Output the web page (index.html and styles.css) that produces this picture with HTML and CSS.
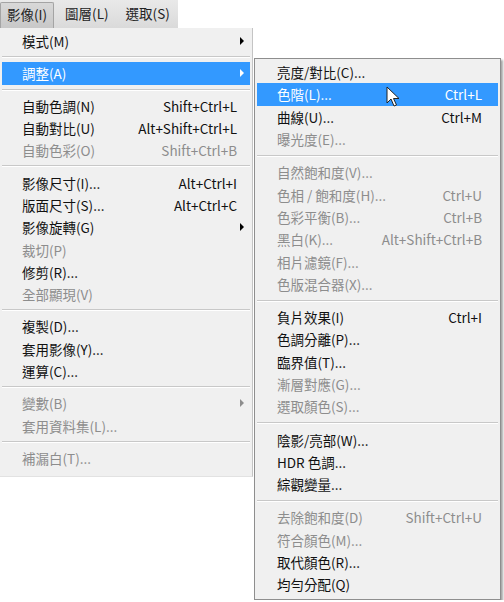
FILE: index.html
```html
<!DOCTYPE html>
<html>

<head>
    <title>影像選單</title>
    <link rel="stylesheet" href="styles.css">
</head>

<body>
    <div class="menubar">
        <span class="tab active">影像(I)</span>
        <span class="tab">圖層(L)</span>
        <span class="tab">選取(S)</span>
    </div>

    <div class="menus">
        <!-- main Image menu -->
        <div class="menu main-menu">
            <div class="item"><span class="label">模式(M)</span><span class="arrow"></span></div>
            <div class="sep"></div>
            <div class="item selected"><span class="label">調整(A)</span><span class="arrow"></span></div>
            <div class="sep"></div>
            <div class="item"><span class="label">自動色調(N)</span><span class="key">Shift+Ctrl+L</span></div>
            <div class="item"><span class="label">自動對比(U)</span><span class="key">Alt+Shift+Ctrl+L</span></div>
            <div class="item off"><span class="label">自動色彩(O)</span><span class="key">Shift+Ctrl+B</span></div>
            <div class="sep"></div>
            <div class="item"><span class="label">影像尺寸(I)...</span><span class="key">Alt+Ctrl+I</span></div>
            <div class="item"><span class="label">版面尺寸(S)...</span><span class="key">Alt+Ctrl+C</span></div>
            <div class="item"><span class="label">影像旋轉(G)</span><span class="arrow"></span></div>
            <div class="item off"><span class="label">裁切(P)</span></div>
            <div class="item"><span class="label">修剪(R)...</span></div>
            <div class="item off"><span class="label">全部顯現(V)</span></div>
            <div class="sep"></div>
            <div class="item"><span class="label">複製(D)...</span></div>
            <div class="item"><span class="label">套用影像(Y)...</span></div>
            <div class="item"><span class="label">運算(C)...</span></div>
            <div class="sep"></div>
            <div class="item off"><span class="label">變數(B)</span><span class="arrow"></span></div>
            <div class="item off"><span class="label">套用資料集(L)...</span></div>
            <div class="sep"></div>
            <div class="item off"><span class="label">補漏白(T)...</span></div>
        </div>

        <!-- Adjustments submenu -->
        <div class="menu sub-menu">
            <div class="item"><span class="label">亮度/對比(C)...</span></div>
            <div class="item selected"><span class="label">色階(L)...</span><span class="key">Ctrl+L</span></div>
            <div class="item"><span class="label">曲線(U)...</span><span class="key">Ctrl+M</span></div>
            <div class="item off"><span class="label">曝光度(E)...</span></div>
            <div class="sep"></div>
            <div class="item off"><span class="label">自然飽和度(V)...</span></div>
            <div class="item off"><span class="label">色相 / 飽和度(H)...</span><span class="key">Ctrl+U</span></div>
            <div class="item off"><span class="label">色彩平衡(B)...</span><span class="key">Ctrl+B</span></div>
            <div class="item off"><span class="label">黑白(K)...</span><span class="key">Alt+Shift+Ctrl+B</span></div>
            <div class="item off"><span class="label">相片濾鏡(F)...</span></div>
            <div class="item off"><span class="label">色版混合器(X)...</span></div>
            <div class="sep"></div>
            <div class="item"><span class="label">負片效果(I)</span><span class="key">Ctrl+I</span></div>
            <div class="item"><span class="label">色調分離(P)...</span></div>
            <div class="item"><span class="label">臨界值(T)...</span></div>
            <div class="item off"><span class="label">漸層對應(G)...</span></div>
            <div class="item off"><span class="label">選取顏色(S)...</span></div>
            <div class="sep"></div>
            <div class="item"><span class="label">陰影/亮部(W)...</span></div>
            <div class="item"><span class="label">HDR 色調...</span></div>
            <div class="item"><span class="label">綜觀變量...</span></div>
            <div class="sep"></div>
            <div class="item off"><span class="label">去除飽和度(D)</span><span class="key">Shift+Ctrl+U</span></div>
            <div class="item off"><span class="label">符合顏色(M)...</span></div>
            <div class="item"><span class="label">取代顏色(R)...</span></div>
            <div class="item"><span class="label">均勻分配(Q)</span></div>

            <!-- mouse pointer over the Levels item -->
            <svg class="pointer" width="14" height="22" viewBox="0 0 14 22">
                <path d="M1 1 L1 17 L5 13 L8 20 L10.5 19 L7.5 12.5 L13 12.5 Z" fill="#fff" stroke="#222" stroke-width="1" stroke-linejoin="round" />
            </svg>
        </div>
    </div>
</body>

</html>
```

FILE: styles.css
```css
/* page */
body {
    margin: 0;
    background: #fff;
    font-family: "Noto Sans CJK TC", "Noto Sans", sans-serif;
    font-size: 13.5px;
    color: #111;
}

/* top menu bar */
.menubar {
    display: flex;
    align-items: flex-end;
    width: 178px;
    height: 28px;
    background: linear-gradient(#e9e9e9, #dadada);
}

.tab {
    padding: 0 6px 5px 11px;
    line-height: 20px;
    color: #222;
}

.tab.active {
    background: linear-gradient(#d8d8d8, #c8c8c8);
    border: 1px solid #a4a4a4;
    border-bottom: none;
    border-radius: 2px 2px 0 0;
    padding: 1px 6px 4px 6px;
}

/* menus */
.menus {
    display: flex;
    align-items: flex-start;
}

.menu {
    background: #f0f0f0;
    padding: 3px 2px;
}

.main-menu {
    width: 248px;
    border-right: 1px solid #c4c4c4;
    border-bottom: 1px solid #e2e2e2;
    padding-top: 2px;
    padding-bottom: 7px;
}

.sub-menu {
    position: relative;
    width: 241px;
    margin-top: 30px;
    margin-left: 1px;
    padding: 2px 2px 3px 2px;
    border: 1px solid #8e8e8e;
    box-shadow: 2px 2px 2px rgba(0, 0, 0, 0.35);
}

.item {
    display: flex;
    align-items: center;
    height: 22.3px;
    padding: 0 13px 0 20px;
}

.sub-menu .item {
    padding-right: 16px;
}

.item .label {
    flex: 1;
}

.item.off {
    color: #8d8d8d;
}

.item.selected {
    background: #3399ff;
    color: #fff;
}

.arrow {
    width: 0;
    height: 0;
    margin-right: -7px;
    border-top: 4px solid transparent;
    border-bottom: 4px solid transparent;
    border-left: 4px solid #000;
}

.item.selected .arrow {
    border-left-color: #fff;
}

.item.off .arrow {
    border-left-color: #8d8d8d;
}

/* separator line */
.sep {
    height: 1px;
    margin: 5px 0 4px 0;
    background: #c8c8c8;
    border-bottom: 1px solid #fff;
}

.main-menu .sep {
    margin: 4px 0 4px 0;
}

/* mouse pointer */
.pointer {
    position: absolute;
    left: 131px;
    top: 27px;
}
```
